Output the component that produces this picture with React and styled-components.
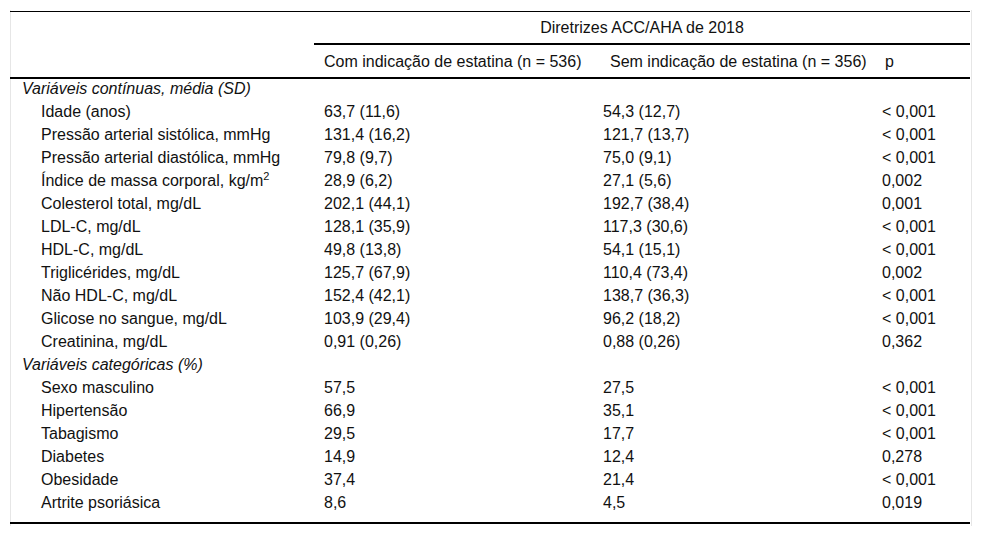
import { createGlobalStyle } from "styled-components";
import styled from "styled-components";

const continuous = [
  ["Idade (anos)", "63,7 (11,6)", "54,3 (12,7)", "< 0,001"],
  ["Pressão arterial sistólica, mmHg", "131,4 (16,2)", "121,7 (13,7)", "< 0,001"],
  ["Pressão arterial diastólica, mmHg", "79,8 (9,7)", "75,0 (9,1)", "< 0,001"],
  ["Índice de massa corporal, kg/m", "28,9 (6,2)", "27,1 (5,6)", "0,002", "2"],
  ["Colesterol total, mg/dL", "202,1 (44,1)", "192,7 (38,4)", "0,001"],
  ["LDL-C, mg/dL", "128,1 (35,9)", "117,3 (30,6)", "< 0,001"],
  ["HDL-C, mg/dL", "49,8 (13,8)", "54,1 (15,1)", "< 0,001"],
  ["Triglicérides, mg/dL", "125,7 (67,9)", "110,4 (73,4)", "0,002"],
  ["Não HDL-C, mg/dL", "152,4 (42,1)", "138,7 (36,3)", "< 0,001"],
  ["Glicose no sangue, mg/dL", "103,9 (29,4)", "96,2 (18,2)", "< 0,001"],
  ["Creatinina, mg/dL", "0,91 (0,26)", "0,88 (0,26)", "0,362"],
];

const categorical = [
  ["Sexo masculino", "57,5", "27,5", "< 0,001"],
  ["Hipertensão", "66,9", "35,1", "< 0,001"],
  ["Tabagismo", "29,5", "17,7", "< 0,001"],
  ["Diabetes", "14,9", "12,4", "0,278"],
  ["Obesidade", "37,4", "21,4", "< 0,001"],
  ["Artrite psoriásica", "8,6", "4,5", "0,019"],
];

const GlobalStyle = createGlobalStyle`
  body {
    margin: 0;
    background: #fff;
    font-family: "Liberation Sans", Arial, sans-serif;
    color: #111;
  }
`;

function Rows({ title, rows, last }) {
  return (
    <>
      <tr>
        <SectionCell colSpan={4}>{title}</SectionCell>
      </tr>
      {rows.map((r, i) => {
        const end = last && i === rows.length - 1;
        return (
          <tr key={r[0]}>
            <LabelCell $last={end}>
              {r[0]}
              {r[4] && <sup>{r[4]}</sup>}
            </LabelCell>
            <Cell $last={end}>{r[1]}</Cell>
            <Cell $last={end}>{r[2]}</Cell>
            <Cell $last={end}>{r[3]}</Cell>
          </tr>
        );
      })}
    </>
  );
}

export default function App() {
  return (
    <>
      <GlobalStyle />
      <Page>
        <Frame>
          <Table>
            <colgroup>
              <col style={{ width: 304 }} />
              <col style={{ width: 279 }} />
              <col style={{ width: 279 }} />
              <col />
            </colgroup>
            <thead>
              <tr>
                <TopHead />
                <GroupHead colSpan={3}>Diretrizes ACC/AHA de 2018</GroupHead>
              </tr>
              <tr>
                <SubHead />
                <SubHead>Com indicação de estatina (n = 536)</SubHead>
                <SubHead $indent={17}>Sem indicação de estatina (n = 356)</SubHead>
                <SubHead $indent={13}>p</SubHead>
              </tr>
            </thead>
            <tbody>
              <Rows title="Variáveis contínuas, média (SD)" rows={continuous} />
              <Rows title="Variáveis categóricas (%)" rows={categorical} last />
            </tbody>
          </Table>
        </Frame>
      </Page>
    </>
  );
}

const Page = styled.div`
  padding: 10px 10px 0 10px;
`;

const Frame = styled.div`
  width: 960px;
  border-left: 1px solid #e6e6e6;
  border-right: 1px solid #e6e6e6;
  padding-top: 1px;
  padding-bottom: 2px;
`;

const Table = styled.table`
  width: 960px;
  margin-left: -1px;
  border-collapse: collapse;
  table-layout: fixed;
  font-size: 16px;
  line-height: 19px;
  border-top: 1px solid #000;
  border-bottom: 2px solid #000;
`;

const TopHead = styled.th`
  height: 31px;
  padding: 0;
`;

const GroupHead = styled.th`
  height: 31px;
  padding: 0;
  font-weight: normal;
  text-align: center;
  vertical-align: middle;
  border-bottom: 2px solid #000;
`;

const SubHead = styled.th`
  height: 32px;
  padding: 0 0 0 ${(p) => p.$indent ?? 10}px;
  font-weight: normal;
  text-align: left;
  vertical-align: middle;
  white-space: nowrap;
  border-bottom: 2px solid #000;
`;

const SectionCell = styled.td`
  padding: 0 10px 4px 12px;
  font-style: italic;
`;

const Cell = styled.td`
  padding: 0 0 ${(p) => (p.$last ? "10px" : "4px")} 10px;
  white-space: nowrap;

  sup {
    font-size: 11px;
    line-height: 0;
  }
`;

const LabelCell = styled(Cell)`
  padding-left: 31px;
`;
